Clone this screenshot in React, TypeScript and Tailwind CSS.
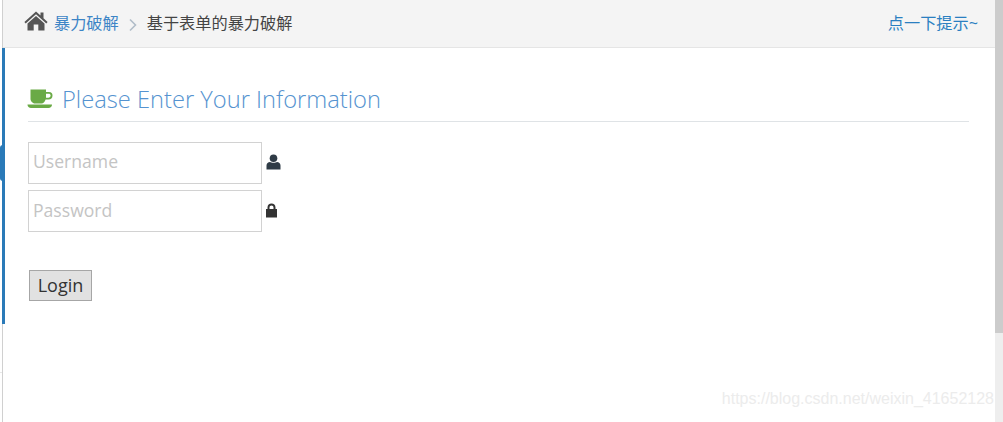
const cjk = { fontFamily: '"Open Sans","Noto Sans CJK SC",sans-serif' };

function House() {
  return (
    <svg width="24" height="20" viewBox="0 0 24 20" className="mt-[-4px] block" fill="#555555">
      <path d="M12 0.5 L16.5 4.6 V1.5 H19.5 V7.3 L23.6 11 L22.3 12.4 L12 3.2 L1.7 12.4 L0.4 11 Z" />
      <path d="M12 5 L20.5 12.6 V19.5 H14.3 V13.5 H9.7 V19.5 H3.5 V12.6 Z" />
    </svg>
  );
}

function Cup() {
  return (
    <svg width="26" height="20" viewBox="0 0 26 20" className="ml-[-1px] block">
      <path d="M3.5 0.5 H19 V3 H22 C24.5 3 25.5 4.5 25.5 6.5 C25.5 9 24 10.5 21.5 10.5 H18.6 C18 12.5 16.5 14.5 14.5 14.5 H8 C5.5 14.5 3.5 12 3.5 10 Z M19 4.8 V8.7 H21.3 C22.8 8.7 23.6 7.8 23.6 6.6 C23.6 5.4 22.8 4.8 21.5 4.8 Z" fill="#6aaa46" fillRule="evenodd" />
      <path d="M0.5 15.5 H25 C25 17.8 23.5 19 21.5 19 H4 C2 19 0.5 17.8 0.5 15.5 Z" fill="#6aaa46" />
    </svg>
  );
}

function User() {
  return (
    <svg width="15" height="16" viewBox="0 0 15 16" className="block" fill="#2f3b46">
      <circle cx="7.5" cy="4.2" r="3.8" />
      <path d="M0.5 15.5 V11.5 C0.5 9.3 2.2 8 4 8 C5 9 10 9 11 8 C12.8 8 14.5 9.3 14.5 11.5 V15.5 Z" />
    </svg>
  );
}

function Lock() {
  return (
    <svg width="13" height="15" viewBox="0 0 13 15" className="block" fill="#333333">
      <path d="M1 6 H2.5 V4.5 C2.5 2 4.2 0.5 6.5 0.5 C8.8 0.5 10.5 2 10.5 4.5 V6 H12 V14.5 H1 Z M4.5 6 H8.5 V4.5 C8.5 3.2 7.7 2.4 6.5 2.4 C5.3 2.4 4.5 3.2 4.5 4.5 Z" fillRule="evenodd" />
    </svg>
  );
}

export default function App() {
  return (
    <div className="flex h-[422px] w-[1003px] overflow-hidden bg-white" style={cjk}>
      <div className="flex w-[2px] flex-col">
        <div className="h-[373px] border-b border-[#e8e8e8] bg-white" />
      </div>
      <div className="flex min-w-0 flex-1 flex-col border-l border-[#d0d0d0]">
        <header className="flex h-[48px] shrink-0 items-center justify-between border-b border-[#e5e5e5] bg-[#f4f4f4] pr-[17px] pl-[21px] text-[16.2px]">
          <div className="flex items-center">
            <House />
            <span className="ml-[6px] text-[#3d85c6]">暴力破解</span>
            <svg width="10" height="14" viewBox="0 0 10 14" className="mx-[9px] mt-[3px] block" fill="none" stroke="#b0bcc8" strokeWidth="1.6">
              <path d="M2 1.5 L7.5 7 L2 12.5" />
            </svg>
            <span className="text-[#444444]">基于表单的暴力破解</span>
          </div>
          <span className="text-[#2a7fc1]">点一下提示~</span>
        </header>
        <main className="relative flex-1">
          <div className="absolute top-0 left-[-1px] h-[276px] w-[3px] bg-[#2a7ab8]" />
          <div className="absolute top-[97px] left-[-3px] h-[36px] w-[3px] rounded-l-full bg-[#2a7ab8]" />
          <div className="pt-[33px] pr-[26px] pl-[25px]">
            <div className="flex items-center gap-[9px] border-b border-[#dfe3e6] pb-[4px]">
              <Cup />
              <h1 className="text-[23.7px] leading-[36px] font-light text-[#5593d0]">Please Enter Your Information</h1>
            </div>
            <div className="mt-[20px] flex items-start gap-[4px]">
              <input placeholder="Username" className="h-[42px] w-[234px] border border-[#d2d2d2] px-[4px] pb-[4px] text-[17.6px] text-[#444] outline-none placeholder:text-[#c4c4c4]" />
              <div className="mt-[12px]"><User /></div>
            </div>
            <div className="mt-[6px] flex items-start gap-[3px]">
              <input placeholder="Password" className="h-[42px] w-[234px] border border-[#d2d2d2] px-[4px] pb-[2px] text-[17.6px] text-[#444] outline-none placeholder:text-[#c4c4c4]" />
              <div className="mt-[13px]"><Lock /></div>
            </div>
            <button className="mt-[38px] ml-px h-[31px] w-[63px] border border-[#a6a6a6] bg-[#e1e1e1] pb-[2px] text-[18px] leading-none text-[#333]">Login</button>
          </div>
          <div className="absolute right-[1px] bottom-[11px] text-[16px] text-[#ececec]" style={{ fontFamily: '"Liberation Sans",sans-serif' }}>https://blog.csdn.net/weixin_41652128</div>
        </main>
      </div>
      <div className="flex w-[8px] shrink-0 flex-col bg-[#eeeeee]">
        <div className="h-[333px] bg-[#cccccc]" />
      </div>
    </div>
  );
}
